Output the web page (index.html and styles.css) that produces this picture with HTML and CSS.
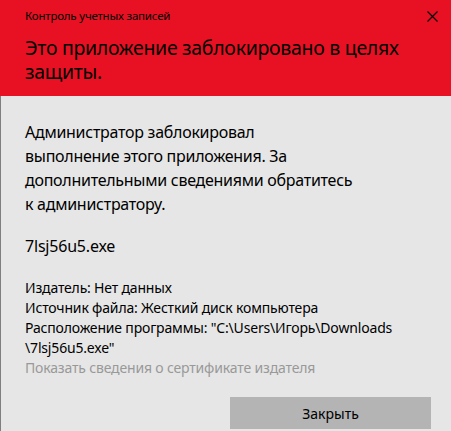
FILE: index.html
```html
<!DOCTYPE html>
<html lang="ru">
<head>
<meta charset="utf-8">
<title>Контроль учетных записей</title>
<link rel="stylesheet" href="styles.css">
</head>
<body>
<div class="dialog">
  <header class="banner">
    <div class="topbar">
      <span class="caption">Контроль учетных записей</span>
      <span class="close" aria-label="Закрыть">
        <svg width="11" height="11" viewBox="0 0 11 11"><path d="M0.5 0.5 L10.5 10.5 M10.5 0.5 L0.5 10.5" stroke="#000" stroke-width="1.1" fill="none"/></svg>
      </span>
    </div>
    <h1 class="headline">Это приложение заблокировано в целях<br>защиты.</h1>
  </header>
  <main class="content">
    <p class="message">Администратор заблокировал<br>выполнение этого приложения. За<br>дополнительными сведениями обратитесь<br>к администратору.</p>
    <p class="filename">7lsj56u5.exe</p>
    <div class="details">
      <div>Издатель: Нет данных</div>
      <div>Источник файла: Жесткий диск компьютера</div>
      <div>Расположение программы: "C:\Users\Игорь\Downloads</div>
      <div>\7lsj56u5.exe"</div>
      <div class="link">Показать сведения о сертификате издателя</div>
    </div>
    <div class="actions">
      <button class="btn">Закрыть</button>
    </div>
  </main>
</div>
</body>
</html>
```
FILE: styles.css
```css
html, body {
  margin: 0;
  padding: 0;
}
body {
  width: 451px;
  height: 431px;
  overflow: hidden;
  background: #e6e6e6;
  font-family: "Noto Sans", "Open Sans", sans-serif;
  color: #000;
}
.dialog {
  display: flex;
  flex-direction: column;
  height: 431px;
}
.banner {
  background: #e81123;
  height: 96px;
  padding-left: 25px;
  box-sizing: border-box;
}
.topbar {
  display: flex;
  justify-content: space-between;
  align-items: flex-start;
  padding-top: 8px;
  padding-right: 13px;
}
.caption {
  font-size: 11.5px;
  letter-spacing: -0.2px;
  line-height: 16px;
  white-space: nowrap;
}
.close {
  display: flex;
  margin-top: 3px;
}
.headline {
  margin: 12px 0 0;
  font-size: 19.5px;
  letter-spacing: -0.3px;
  font-weight: normal;
  line-height: 24px;
  white-space: nowrap;
}
.content {
  flex: 1;
  border-left: 1px solid #7f7f7f;
  padding-left: 24px;
  display: flex;
  flex-direction: column;
}
.message {
  margin: 24px 0 0;
  font-size: 16px;
  letter-spacing: -0.27px;
  line-height: 24px;
  white-space: nowrap;
}
.filename {
  margin: 18px 0 0;
  font-size: 16px;
  letter-spacing: -0.2px;
  line-height: 24px;
}
.details {
  margin-top: 20px;
  font-size: 14px;
  letter-spacing: -0.17px;
  line-height: 20px;
  white-space: nowrap;
}
.link {
  color: #999999;
}
.actions {
  display: flex;
  justify-content: flex-end;
  margin-top: 19px;
  padding-right: 20px;
}
.btn {
  width: 201px;
  height: 32px;
  border: none;
  background: #b4b4b4;
  font-family: inherit;
  font-size: 14px;
  color: #000;
  padding: 0;
}
```
